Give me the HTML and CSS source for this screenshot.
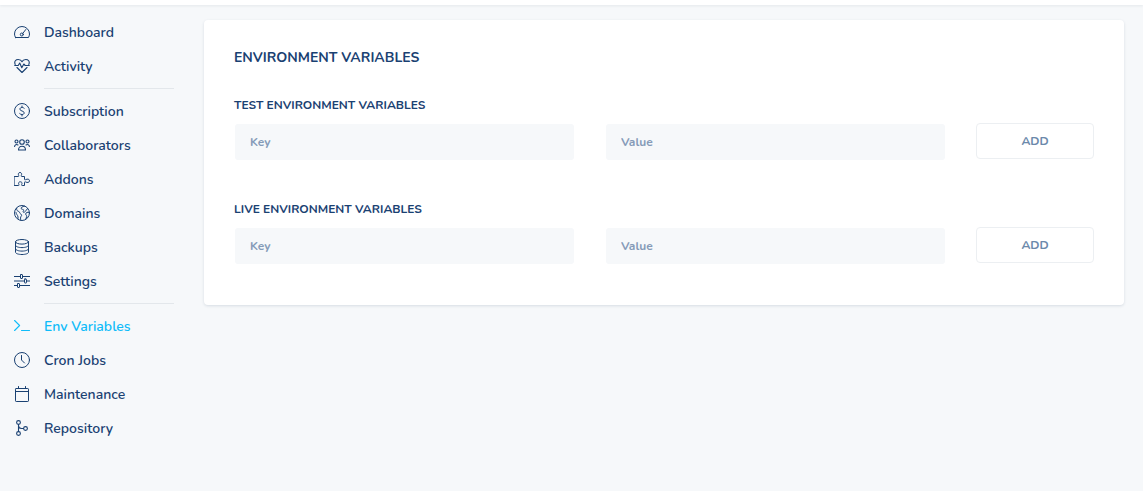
FILE: index.html
```html
<!DOCTYPE html>
<html lang="en">
<head>
<meta charset="utf-8">
<meta name="viewport" content="width=device-width, initial-scale=1">
<title>Environment Variables</title>
<link rel="stylesheet" href="styles.css">
</head>
<body>
<header class="topbar"></header>
<div class="layout">
  <nav class="sidebar" aria-label="Main">
    <a class="nav-item" href="#dashboard"><svg class="icon" viewBox="0 0 16 16"><path d="M1.500 13.500h13c.6-1.100 1-2.400 1-3.500a7.500 7.500 0 0 0-15 0c0 1.100.4 2.400 1 3.500zM8.800 9.400l3-3.900"/><circle cx="7.800" cy="10.500" r="1.500"/></svg>Dashboard</a>
    <a class="nav-item" href="#activity"><svg class="icon icon--bold" viewBox="0 0 16 16"><path d="M1.200 6.500C-.2 3.200 2 1.500 4.200 1.500 6 1.500 7.400 2.300 8 3.700c.6-1.400 2-2.200 3.800-2.200 2.200 0 4.400 1.700 3 5M3 9.500l5 5 5-5M.7 7.500h3.500l1.500-2.500 2.100 4.800 2-3.800 1.400 1.500h4.100"/></svg>Activity</a>
    <hr class="divider">
    <a class="nav-item" href="#subscription"><svg class="icon" viewBox="0 0 16 16"><circle cx="8" cy="8" r="7.500"/><path d="M10.200 5.300C9.500 4.700 8.800 4.500 8 4.500c-1.200 0-2.100.6-2.100 1.600C5.900 8.500 10.200 7.500 10.200 9.900c0 1-.9 1.600-2.200 1.600-.9 0-1.700-.3-2.300-.9M8 3v1.500M8 11.500V13"/></svg>Subscription</a>
    <a class="nav-item" href="#collaborators"><svg class="icon icon--bold" viewBox="0 0 16 16"><circle cx="2.500" cy="4.500" r="1.500"/><circle cx="8" cy="5" r="2.300"/><circle cx="13.500" cy="4.500" r="1.500"/><path d="M4.500 13c0-5 7-5 7 0zM.6 9.500c0-1.800 2-2.500 3.400-1.500M15.400 9.500c0-1.800-2-2.500-3.400-1.500"/></svg>Collaborators</a>
    <a class="nav-item" href="#addons"><svg class="icon" viewBox="0 0 16 16"><path d="M.5 5.500h3.700c.7 0 .8-.5.500-1C3.900 2.900 4.500 1.500 6 1.500s2.100 1.400 1.300 3c-.3.500-.2 1 .5 1h2.700v2.700c0 .7.500.8 1 .5 2-1.100 4-.6 4 1.100s-2 2.200-4 1.100c-.5-.3-1-.2-1 .5v3.100H8.200c-.7 0-.8-.5-.5-1 .8-1.600.1-2.700-1.400-2.700s-2.200 1.100-1.400 2.700c.3.500.2 1-.5 1H.5z"/></svg>Addons</a>
    <a class="nav-item" href="#domains"><svg class="icon" viewBox="0 0 16 16"><circle cx="8" cy="8" r="7.500"/><path d="M2.600 3.200c-.2 2.300.9 2.900 2.200 3.300 1.200.4.500 1.700 1.700 2.300 1.300.7 1.500 1.600.6 2.500-.7.800-.7 2.500-.3 4M2 7.500c.2 2.500 1.800 2 2 4.500v1.500M10.500 1.200C8.500 1.500 6.500 2.500 7.300 3.800c.6 1 1.800.1 2.300 1 .5.800-1 1.600-.3 2.400.8.800 1.700-.8 2.800-1.600L13.500 3.500M15 7.300c-1.500-.4-3.300.3-3.300 1.700 0 1.500 1.500 1.400 1 2.700l-.8 2"/></svg>Domains</a>
    <a class="nav-item" href="#backups"><svg class="icon" viewBox="0 0 16 16"><ellipse cx="8" cy="2.800" rx="6.500" ry="2.300"/><path d="M1.500 2.800v10.400c0 1.300 2.900 2.300 6.500 2.300s6.500-1 6.500-2.300V2.800M1.500 6.300c0 1.300 2.900 2.300 6.500 2.300s6.500-1 6.500-2.300M1.500 9.800c0 1.300 2.900 2.300 6.500 2.300s6.500-1 6.500-2.300"/></svg>Backups</a>
    <a class="nav-item" href="#settings"><svg class="icon" viewBox="0 0 16 16"><path d="M0 3.500h6.500M8.500 3.500H16M0 8h10.500M12.500 8H16M0 12.500h3.500M5.500 12.500H16"/><rect x="6.500" y="1.500" width="2" height="4" rx=".5"/><rect x="10.500" y="6" width="2" height="4" rx=".5"/><rect x="3.500" y="10.500" width="2" height="4" rx=".5"/></svg>Settings</a>
    <hr class="divider">
    <a class="nav-item nav-item--active" href="#env" aria-current="page"><svg class="icon icon--bold" viewBox="0 0 16 16"><path d="M.6 2.500l5 5-5 5M7.500 12.500h8"/></svg>Env Variables</a>
    <a class="nav-item" href="#cron"><svg class="icon" viewBox="0 0 16 16"><circle cx="8" cy="8" r="7.500"/><path d="M7.500 3.500V8l3 3"/></svg>Cron Jobs</a>
    <a class="nav-item" href="#maintenance"><svg class="icon" viewBox="0 0 16 16"><rect x="1.500" y="2.500" width="13" height="13" rx=".7"/><path d="M1.500 5.500h13M4.500.500v2M11.500.500v2"/></svg>Maintenance</a>
    <a class="nav-item" href="#repository"><svg class="icon icon--bold" viewBox="0 0 16 16"><circle cx="4.500" cy="2.500" r="1.900"/><circle cx="4.500" cy="13.500" r="1.900"/><circle cx="11.500" cy="8.500" r="1.900"/><path d="M4.500 4.500v7M4.500 5.500c0 2 1.500 3 3 3h2"/></svg>Repository</a>
  </nav>
  <main class="card">
    <h1 class="card-title">ENVIRONMENT VARIABLES</h1>
    <form class="group">
      <h2 class="group-title">TEST ENVIRONMENT VARIABLES</h2>
      <div class="fields">
        <input class="field" type="text" placeholder="Key" aria-label="Test variable key">
        <input class="field" type="text" placeholder="Value" aria-label="Test variable value">
        <button class="add" type="button">ADD</button>
      </div>
    </form>
    <form class="group">
      <h2 class="group-title">LIVE ENVIRONMENT VARIABLES</h2>
      <div class="fields">
        <input class="field" type="text" placeholder="Key" aria-label="Live variable key">
        <input class="field" type="text" placeholder="Value" aria-label="Live variable value">
        <button class="add" type="button">ADD</button>
      </div>
    </form>
  </main>
</div>
</body>
</html>
```
FILE: styles.css
```css
* {
  box-sizing: border-box;
}

body {
  margin: 0;
  background: #f6f8fa;
  color: #1a4172;
  font-family: Nunito, Lato, "Open Sans", sans-serif;
}

.topbar {
  height: 5px;
  background: #fff;
  box-shadow: 0 1px 3px rgba(30, 50, 70, 0.08);
}

.layout {
  display: flex;
  align-items: flex-start;
  padding-right: 19px;
}

.sidebar {
  flex: none;
  width: 204px;
  padding: 10px 30px 10px 14px;
}

.nav-item {
  display: flex;
  align-items: center;
  gap: 14px;
  height: 34px;
  color: inherit;
  font-size: 14px;
  font-weight: 600;
  line-height: 21px;
  text-decoration: none;
}

.nav-item--active {
  color: #0fbcf9;
}

.icon {
  flex: none;
  width: 16px;
  height: 16px;
  fill: none;
  stroke: currentColor;
  stroke-width: 1;
  stroke-linecap: round;
  stroke-linejoin: round;
}

.icon--bold {
  stroke-width: 1.1;
}

.divider {
  height: 1px;
  margin: 5px 0 5px 30px;
  border: 0;
  background: #e3e7eb;
}

.card {
  flex: 1;
  min-width: 0;
  margin-top: 15px;
  padding: 28px 30px 40px;
  border-radius: 4px;
  background: #fff;
  box-shadow: 0 1px 3px rgba(30, 60, 90, 0.14);
}

.card-title {
  margin: 0;
  font-size: 14px;
  font-weight: 700;
  line-height: 20px;
}

.group {
  margin-top: 27px;
}

.group + .group {
  margin-top: 38px;
}

.group-title {
  margin: 0 0 8px;
  font-size: 12px;
  font-weight: 700;
  line-height: 20px;
}

.fields {
  display: grid;
  grid-template-columns: 1fr 1fr 118px;
  align-items: start;
  gap: 30px;
}

.field {
  width: 100%;
  min-width: 0;
  height: 38px;
  padding: 0 15px;
  border: 1px solid transparent;
  border-radius: 4px;
  background: #f6f8fa;
  background-clip: padding-box;
  color: #1a4172;
  font: 700 12px/20px Nunito, Lato, "Open Sans", sans-serif;
}

.field::placeholder {
  color: #859bb8;
  opacity: 1;
}

.add {
  height: 36px;
  padding: 0;
  border: 1px solid #eceff2;
  border-radius: 4px;
  background: #fff;
  color: #6c89ab;
  font: 700 12px/20px Nunito, Lato, "Open Sans", sans-serif;
}
```
